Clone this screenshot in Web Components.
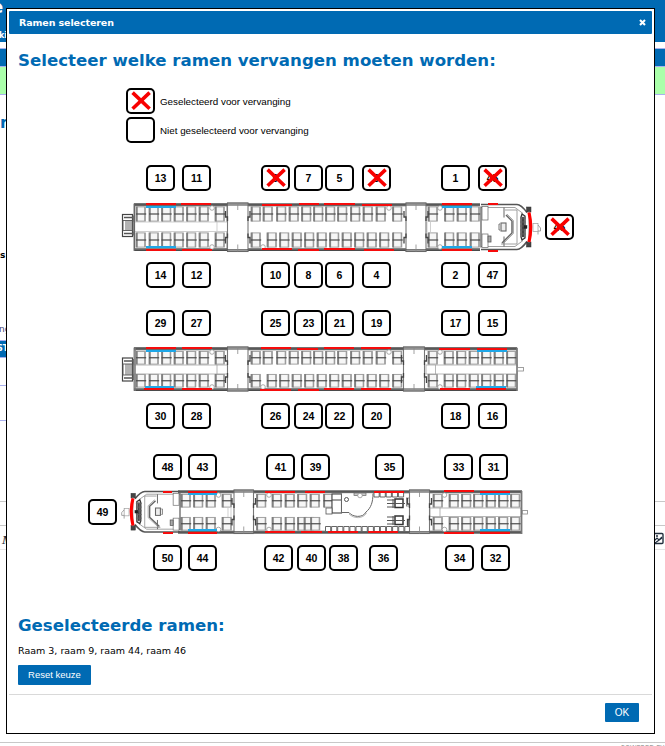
<!DOCTYPE html>
<html lang="nl">
<head>
<meta charset="utf-8">
<title>Ramen selecteren</title>
<style>
html,body{margin:0;height:746px;overflow:hidden;background:#fff}
body{position:relative;font-family:"DejaVu Sans",sans-serif}
modal-dialog{position:absolute;left:6px;top:8px}
</style>
</head>
<body>
<page-backdrop></page-backdrop>
<modal-dialog heading="Ramen selecteren">
  <section-title>Selecteer welke ramen vervangen moeten worden:</section-title>
  <legend-list></legend-list>
  <train-plan></train-plan>
  <section-title class="s">Geselecteerde ramen:</section-title>
  <selection-list>Raam 3, raam 9, raam 44, raam 46</selection-list>
  <action-button style="--w:73px;--h:20px;--f:9.5px">Reset keuze</action-button>
  <action-button slot="footer" style="--w:34px;--h:19px;--f:10px">OK</action-button>
</modal-dialog>
<script>
function define(name, html){
  customElements.define(name, class extends HTMLElement{
    connectedCallback(){
      if(this.shadowRoot) return;
      this.attachShadow({mode:'open'}).innerHTML = typeof html==='function' ? html(this) : html;
    }
  });
}

define('page-backdrop', `<style>
:host{display:block;width:665px;height:746px;overflow:hidden;font:bold 9px "DejaVu Sans",sans-serif}
div{box-sizing:border-box;white-space:nowrap;line-height:1}
.l{width:7px}
.lav{border-top:1px solid #a9b0ee}
.g{border-top:1px solid #c8c8c8}
.row{display:flex;justify-content:space-between}
</style>
<div style="height:42px;background:#006ab3;color:#fff"><div class="l" style="height:30px;font-size:18px;text-indent:-9px;line-height:14px">e</div><div class="l" style="font-size:8px;line-height:11px;text-indent:-1px">ki</div></div>
<div style="height:6px"></div>
<div class="lav" style="height:18px;background:#006ab3"></div>
<div class="lav" style="height:28px;background:#afa"></div>
<div class="lav" style="height:20px"></div>
<div class="l" style="height:134px;color:#006ab3;font-size:16px;line-height:17px">r</div>
<div class="l" style="height:76px;font-size:9px;line-height:14px">s</div>
<div class="l" style="height:10px;font-weight:normal;font-size:9px;text-indent:-1px;color:#447;line-height:10px">ng</div>
<div style="height:6px"></div>
<div class="lav l" style="height:17px;background:#006ab3;color:#fff;font-size:8px;line-height:15px;text-indent:-3px">ST</div>
<div class="lav l" style="height:28px"></div>
<div class="lav l" style="height:35px"></div>
<div class="lav l" style="height:81px"></div>
<div class="g" style="height:24px"></div>
<div class="g row" style="height:24px"><div class="l" style="font:italic bold 13px 'Liberation Serif',serif;padding:6px 0 0 2px;color:#222f3e">M</div>
<svg width="12" height="24" viewBox="0 0 12 24" fill="none" stroke="#222f3e"><rect x="-1" y="7.5" width="11" height="10" rx="1" stroke-width="1.4"/><path d="M1 15l3-3 2 2 3-3M2 17l7-5" stroke-width="1.2"/><circle cx="4" cy="10" r=".7"/></svg></div>
<div style="border-top:1px solid #e6e6e6;height:193px"></div>
<div class="g" style="height:4px"><div style="padding:1px 0 0 621px;font-size:6.5px;font-weight:normal;color:#777;line-height:8px">POWERED BY</div></div>`);

define('modal-dialog', el => `<style>
:host{display:flex;flex-direction:column;box-sizing:border-box;width:649px;height:726px;border:1px solid #000;background:#fff;padding:2px}
header{display:flex;justify-content:space-between;align-items:center;box-sizing:border-box;height:23px;background:#006ab3;border-radius:1px;color:#fff;padding:0 7px 0 10px;font:bold 9.5px/23px "DejaVu Sans",sans-serif;flex:none}
header span{letter-spacing:-.1px}
header svg{margin-right:-1px}
main{flex:1;display:flex;flex-direction:column;align-items:flex-start;padding:0 9px;min-height:0}
footer{flex:none;box-sizing:border-box;height:37px;border-top:1px solid #d9d9d9;display:flex;justify-content:flex-end;padding:8px 13px 0}
</style>
<header><span>${el.getAttribute('heading')}</span><svg width="7" height="7" viewBox="0 0 7 7" stroke="#fff" stroke-width="2.1"><path d="M1 1l5 5M6 1L1 6"/></svg></header>
<main><slot></slot></main><footer><slot name="footer"></slot></footer>`);

define('section-title', `<style>
:host{display:block;color:#006ab3;font:bold 16.6px/22px "DejaVu Sans",sans-serif;white-space:nowrap;padding:16px 0 0;height:21px}
:host(.s){padding-top:35px}
</style><slot></slot>`);

define('selection-list', `<style>
:host{display:block;font:9.5px/14px "DejaVu Sans",sans-serif;padding:8px 0 7px;white-space:nowrap}
</style><slot></slot>`);

define('action-button', `<style>
:host{display:block}
button{display:block;width:var(--w);height:var(--h);padding:0;border:0;border-radius:1px;background:#006ab3;color:#fff;font:var(--f)/18px "Liberation Sans",Arial,sans-serif}
</style><button><slot></slot></button>`);

const cross = '<svg class="x" width="24" height="22" viewBox="0 0 24 22" stroke="#f80000" stroke-width="3.6"><path d="M3.6 2.6L20.6 18.8M20.6 2.6L3.6 18.8"/></svg>';

define('window-box', el => `<style>
:host{display:block;width:29px;height:26px}
div{position:relative;box-sizing:border-box;width:29px;height:26px;border:2px solid #000;border-radius:5px;background:#fff;text-align:center;font:bold 10.5px/23px "Liberation Sans",Arial,sans-serif;color:#000}
.x{position:absolute;left:.5px;top:0}
</style><div><slot></slot>${el.hasAttribute('selected')?cross:''}</div>`);

define('legend-list', `<style>
:host{display:grid;grid-template-columns:29px auto;gap:3px 5px;align-items:center;padding:17px 0 0 108px;font:9.8px/14px "Liberation Sans",Arial,sans-serif;color:#000;white-space:nowrap}
span{padding-top:2px}
</style><window-box selected></window-box><span>Geselecteerd voor vervanging</span><window-box></window-box><span>Niet geselecteerd voor vervanging</span>`);

const r = (x,y,w,h,f='#fff',s='#666',sw=.7) => `<rect x="${x}" y="${y}" width="${w}" height="${h}" fill="${f}" stroke="${s}" stroke-width="${sw}"/>`;
const p = (d,s='#555',w=.8,f='none') => `<path d="${d}" stroke="${s}" stroke-width="${w}" fill="${f}"/>`;

// Two seats seen from above, with the backrest at the left
const seat = (x,y,h) => r(x,y+.4,8.3,h-.8,'#f6f6f6','#999',.9)
  + p(`M${x-.4} ${y}v${h}`,'#808080',2) + p(`M${x+7.8} ${y+.5}v${h-1}`,'#999',1.2)
  + p(`M${x-1} ${y+h/2}h10.2`,'#4a4a4a',1.2);
const seats = (xs,y,h) => xs.map(x=>seat(x,y,h)).join('');
const wall = (a,b,t,u) => `<rect x="${a}" y="${t}" width="${b-a}" height="2.8" fill="#666"/><rect x="${a}" y="${u-2.8}" width="${b-a}" height="2.8" fill="#666"/>`
  + p(`M${a} ${t+.5}H${b}M${a} ${u-.5}H${b}`,'#444',.8);
const door = (a,b,t,u) => r(a,t,b-a,u-t,'#fff','#777',1.1) + r(a,t,b-a,2.2,'#999','#555',.6)+r(a,u-2.2,b-a,2.2,'#999','#555',.6)
  + p(`M${(a+b)/2} ${t}v7M${(a+b)/2} ${u-7}v7`,'#888',.8)
  + p(`M${a-2} ${t+8}v6h2v4M${a-2} ${u-8}v-6h2v-4M${b+2} ${t+8}v6h-2v4M${b+2} ${u-8}v-6h-2v-4`,'#444',1.3);
const toilet = (xs,t) => xs.map(x=>`<circle cx="${x}" cy="${t}" r="2.3" fill="#fff" stroke="#888" stroke-width=".7"/>`).join('');
const bars = (list,y,c) => list.map(([a,b,d=0])=>`<rect x="${a}" y="${Math.round(y+d)}" width="${b-a}" height="2" fill="${c}"/>`).join('');
const gangway = (y,h) => r(122.5,y,10,h,'#fff','#444',1.2) + p(`M124 ${y+3}h9M124 ${y+h-3}h9`,'#555',1.5)
  + [126,128,130].map(x=>p(`M${x} ${y+6}v${h-12}`,'#666',1)).join('') + r(123,y+6,9,h-12,'none','#555',.9) + p(`M133.5 ${y+1}v${h-2}`,'#777',1.4);

// Driver's cab, nose to the right; origin at the left of the cab, on the centre line
const cab = hh => p(`M0 ${-hh+1}H36Q40 ${-hh+1} 46 ${-hh+9}M0 ${hh-1}H36Q40 ${hh-1} 46 ${hh-9}`,'#555',1.7)
  + p(`M0 ${-hh+4}H34L42 ${-hh+10}M0 ${hh-4}H34L42 ${hh-10}`,'#888',.8)
  + p(`M0 ${-hh+3}V${hh-3}`,'#444',1.1)
  + r(1,-hh+3,6,hh-10) + r(1,7,6,hh-10) + r(7,9,3,6,'#aaa','#555',.8)
  + r(20,-4,5,8,'#eee','#666',1.1) + p('M19 -3h-1v6h1','#777',1)
  + p(`M23 ${-hh+4}v10M23 ${hh-4}v-10`,'#666',1) + p('M25 -12L31 -6V6L21 16','#666',1.5) + p('M26 -13L32.5 -6.5V6.5L22 17','#999',.8)
  + p('M20 17H36M24 -17H36M36 -17V17','#888',.8)
  + p('M41 -13l3 2v22l-3 2-1-3v-20z','#333',1.3,'#ddd') + p('M42 -10v20','#444',2) + [-9,-5,-1,3,7].map(y=>p(`M39 ${y}h6`,'#666',.8)).join('')
  + r(43,-1.5,3,3,'#222','#222',.4)
  + r(45.5,-20,4.5,5,'#444','#333',.5) + r(45.5,15,4.5,5,'#444','#333',.5)
  + p('M48 -16V16','#888',.8) + r(52,-3.5,5,8,'#fff','#999',.7) + p('M57 4.5v3M57 -2l2.5 3v3h-2.5','#888',.8)
  + p('M48 -14.5Q51.4 0 48 15','#f00',3.2);

const L=[137,150,162.5,175,187.5,200,216];
const MT=[252,264,277.5,290,302.5,314.5,326.5,338.5,351.5,364,377,393.5];
const MB=[252,268,280.5,293,305.5,318,330.5,343,355.5,368,380.5,393.5];
const red='#f60c0c', blue='#1ea7e8';

const car1 = gangway(214.5,22) + r(134,204,93,46.5,'#fff','#666',.8) + r(248,204,158,46.5,'#fff','none',0)
  + r(134,222,94,9.5,'#fff','#bbb',.7) + p('M217 222v9','#bbb',.7) + wall(134,480,203.5,251)
  + seats(L,206.5,15) + seats(L,232.5,15) + seats(MT,206.5,15) + seats(MB,232.5,15)
  + seats([429,445.5,458,471],206.5,15) + seats([429,445.5,458,471],232.5,15)
  + p('M134.5 204v47','#666',1.2) + p('M427 222v10M430.5 222v10','#bbb',.7)
  + toilet([212,389,440],208) + toilet([212,263,440],247)
  + door(227.5,248,203,251.5) + door(406,426,203,251.5)
  + `<g transform="translate(481 227)">${cab(23.5)}</g>`
  + bars([[146,176],[181,211],[262,292,1],[299,319],[324,355],[362,392,1],[442,472],[488,498]],203,red)
  + bars([[146,176],[442,472]],206,blue) + bars([[146,176],[442,472]],246,blue)
  + bars([[146,176],[182,212],[262,292,-1],[298,319],[324,355,-1],[364,394],[442,472],[488,498,1]],249,red);

const R2=[429,445,457.5,470,482.5,495,507.5];
const car2 = gangway(358,23) + r(134,348,383,42.5,'#fff','#666',.8) + r(134,365,94,9,'#fff','#999',.7) + r(426,365,91,9,'#fff','#999',.7)
  + p('M217 365v9M435.5 365v9','#999',.7) + wall(134,517,347.5,391)
  + seats(L,351,13.5) + seats(L,374,13.5) + seats(MT,351,13.5) + seats(MB,374,13.5) + seats(R2,351,13.5) + seats(R2,374,13.5)
  + p('M135 348v43','#777',1.5) + p('M517 348v43','#777',1.5) + r(517.5,367.5,6,3.5,'#fff','#888',.8)
  + toilet([212,389,440],352) + toilet([212,263,440],387)
  + door(227.5,248,347,391) + door(403.5,424.5,347,391)
  + bars([[146,176],[182,212],[261,291],[297,318,.5],[324,354],[361,391],[439,470,.5],[477,507,.5]],347.3,red)
  + bars([[146,176],[477,507]],349.8,blue)
  + bars([[144,174],[182,212],[260,291,.5],[298,319,1],[324,354],[361,391],[440,470],[476,506]],388,red)
  + bars([[145,174],[476,506]],386,blue);

const R3=[434,450,462.5,474.5,487,499.5,511.5];
let small='';
for(let x=325.5;x<405;x+=6.1) small+=p(`M${x} 531v-4.5h5.2v4.5`,'#555',.9,'#fff');
for(let x=374;x<402;x+=6.1) small+=p(`M${x} 493v4h5.2v-4`,'#555',.9,'#fff');
const car3 = r(178,491,344,42,'#fff','none',0) + r(430,508,91,8.5,'#fff','#999',.7) + p('M440 508v8.5','#999',.7)
  + wall(178,522,490.5,533.5)
  + seats([182,194.5,207,223,257.5,273,286,298.5,311,324.5],494,13.5) + seats([182,194.5,207,223,257.5,273,286,298.5,305,311.5],517,13.5)
  + seats(R3,494,13.5) + seats(R3,517,13.5) + small
  + r(332,494,9.5,19,'#fff','#444',1.1) + r(326,508,6,6,'#fff','#555',.8) + p('M332 500h9','#444',1)
  + p('M341.5 493.5V512.5H349C352 517 363 518.5 366 512C371 508 373 502 373 493.5','#666',1,'#fff') + p('M349 514C354 519 363 519 366.5 513','#999',.7)
  + '<circle cx="346.5" cy="499.5" r="2" fill="none" stroke="#555"/>' + r(354,493,12,2.5,'#ccc','#666',.7) + toilet([360],495.5)
  + [499,516].map(y=>r(395,y,8,8.5,'#fff','#333',1.5)+p(`M387 ${y+1}h8M387 ${y+4.5}h18M387 ${y+8}h8M393 ${y}v9`,'#555',1)).join('')
  + r(406.5,498,3.5,8,'#fff','#777',.8) + p('M408 519v8','#444',1.5)
  + toilet([218.5,269,444.5],495) + toilet([218.5,269,444.5],529.5)
  + p('M228 508v9M231 508v9','#bbb',.7)
  + door(234,253.5,490,533.5) + door(409.5,429.5,490,533.5)
  + p('M521.5 491v43','#777',1.8) + r(522.5,510.5,5,3.5,'#fff','#888',.8)
  + `<g transform="translate(180 511.7) scale(-.98 .92)">${cab(23)}</g>`
  + bars([[163,172],[188,217],[265,295],[305,325],[374,404],[444,474,-.5],[480,510]],490.6,red)
  + bars([[188,217],[480,510]],493,blue) + bars([[188,217],[480,510]],529.3,blue)
  + bars([[163,173,.5],[188,217],[265,295,-.5],[301,322,-.5],[328,358,-.5],[368,398,-.5],[444,474],[480,510]],531.5,red);

const X=[146,182,261,294,325,362.5,441.5,478];
const row=(n,xs,y)=>n.map((v,i)=>[v,xs[i],y]);
const boxes=[
  ...row([13,11,9,7,5,3,1,45],X,165), ...row([14,12,10,8,6,4,2,47],X,262),
  ...row([29,27,25,23,21,19,17,15],X,310), ...row([30,28,26,24,22,20,18,16],X,403),
  ...row([48,43,41,39,35,33,31],[153,188,266,301,375,444.5,479.5],454),
  ...row([50,44,42,40,38,36,34,32],[153,188,264.5,297,329,369,445,481.5],545),
  [46,545,214],[49,88,499]];
const selected=new Set([9,3,45,46]);

define('train-plan', `<style>
:host{display:block;position:relative;width:520px;height:425px;margin:12px 0 0 62px;flex:none}
svg{display:block}
window-box{position:absolute}
</style><svg width="520" height="425" viewBox="80 155 520 425">${car1}${car2}${car3}</svg>`
+ boxes.map(([n,x,y])=>`<window-box${selected.has(n)?' selected':''} style="left:${Math.floor(x)-80}px;top:${y-155}px">${n}</window-box>`).join(''));
</script>
</body>
</html>
